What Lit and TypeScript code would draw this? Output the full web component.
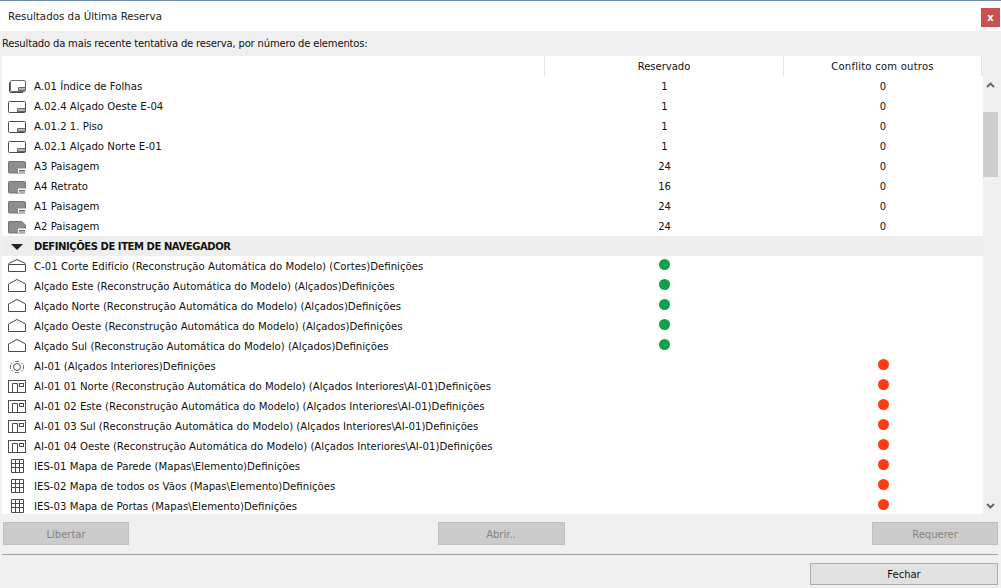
import { LitElement, html, css, svg } from "lit";
import { customElement } from "lit/decorators.js";

const dark = "#4a4a4a";
const notch = svg`<path d="M10.500 16.500v-4h8M11 14h7M11 15.500h7" fill="none" stroke="#666"/>`;
const fnotch = svg`<path d="M11 17v-4.500h8v4.500z" fill="#fff"/><path d="M12 14.500h6M12 16h6" stroke="#666"/>`;
const icons: Record<string, unknown> = {
  index: svg`<rect x="3.500" y="4.500" width="15" height="11" rx="1.500" fill="#fff" stroke="#6a6a6a"/><path d="M2.500 6.500v8.500q0 1.500 1.500 1.500h12" fill="none" stroke="${dark}"/><path d="M11.500 15.500v-4h7M12 13h6M12 14.500h6" fill="none" stroke="#666"/>`,
  layout: svg`<rect x="1.500" y="5.500" width="17" height="11" rx="1" fill="#fff" stroke="${dark}"/>${notch}`,
  filled: svg`<rect x="1.500" y="5.500" width="17" height="11.500" rx="1" fill="#8b8d90" stroke="#717376"/>${fnotch}`,
  corner: svg`<path d="M2 5.500q-.5 0-.5.5v10.500q0 .5.500.5h16.500v-8l-4-3.500z" fill="#8b8d90" stroke="#717376"/>${fnotch}`,
  section: svg`<path d="M1.500 8.500h17v7h-17zM1.500 7.500L10 3.500L18.500 7.500" fill="none" stroke="${dark}"/>`,
  elevation: svg`<path d="M1.500 8L10 3.500L18.500 8V15.500H1.500z" fill="none" stroke="${dark}"/>`,
  ie: svg`<circle cx="10" cy="11" r="3.500" fill="none" stroke="#555"/><path d="M8 5.500h4M8 16.500h4M3.500 9v4M16.500 9v4M5.500 6.800L4.300 8.200M14.500 6.800L15.700 8.200M5.500 15.200L4.300 13.800M14.500 15.200L15.700 13.800" fill="none" stroke="#777"/>`,
  ieplan: svg`<rect x="1.500" y="4.500" width="17" height="12" fill="none" stroke="${dark}"/><path d="M5.500 16.500v-9h5v9" fill="none" stroke="${dark}"/><rect x="12.500" y="7.500" width="4" height="3" fill="none" stroke="${dark}"/>`,
  grid: svg`<path d="M4.500 3.500h12v13h-12zM8.500 3.500v13M12.500 3.500v13M4.500 7.500h12M4.500 11.500h12" fill="none" stroke="${dark}"/>`,
};

type Row = { icon: string; name: string; a?: string; b?: string; dot?: "green" | "red" };
const rows: Row[] = [
  { icon: "index", name: "A.01 Índice de Folhas", a: "1", b: "0" },
  { icon: "layout", name: "A.02.4 Alçado Oeste E-04", a: "1", b: "0" },
  { icon: "layout", name: "A.01.2 1. Piso", a: "1", b: "0" },
  { icon: "layout", name: "A.02.1 Alçado Norte E-01", a: "1", b: "0" },
  { icon: "filled", name: "A3 Paisagem", a: "24", b: "0" },
  { icon: "filled", name: "A4 Retrato", a: "16", b: "0" },
  { icon: "filled", name: "A1 Paisagem", a: "24", b: "0" },
  { icon: "corner", name: "A2 Paisagem", a: "24", b: "0" },
];
const defs: Row[] = [
  { icon: "section", name: "C-01 Corte Edifício (Reconstrução Automática do Modelo) (Cortes)Definições", dot: "green" },
  { icon: "elevation", name: "Alçado Este (Reconstrução Automática do Modelo) (Alçados)Definições", dot: "green" },
  { icon: "elevation", name: "Alçado Norte (Reconstrução Automática do Modelo) (Alçados)Definições", dot: "green" },
  { icon: "elevation", name: "Alçado Oeste (Reconstrução Automática do Modelo) (Alçados)Definições", dot: "green" },
  { icon: "elevation", name: "Alçado Sul (Reconstrução Automática do Modelo) (Alçados)Definições", dot: "green" },
  { icon: "ie", name: "AI-01 (Alçados Interiores)Definições", dot: "red" },
  { icon: "ieplan", name: "AI-01 01 Norte (Reconstrução Automática do Modelo) (Alçados Interiores\\AI-01)Definições", dot: "red" },
  { icon: "ieplan", name: "AI-01 02 Este (Reconstrução Automática do Modelo) (Alçados Interiores\\AI-01)Definições", dot: "red" },
  { icon: "ieplan", name: "AI-01 03 Sul (Reconstrução Automática do Modelo) (Alçados Interiores\\AI-01)Definições", dot: "red" },
  { icon: "ieplan", name: "AI-01 04 Oeste (Reconstrução Automática do Modelo) (Alçados Interiores\\AI-01)Definições", dot: "red" },
  { icon: "grid", name: "IES-01 Mapa de Parede (Mapas\\Elemento)Definições", dot: "red" },
  { icon: "grid", name: "IES-02 Mapa de todos os Vãos (Mapas\\Elemento)Definições", dot: "red" },
  { icon: "grid", name: "IES-03 Mapa de Portas (Mapas\\Elemento)Definições", dot: "red" },
];

@customElement("app-root")
export class AppRoot extends LitElement {
  static styles = css`
    :host { display: block; width: 1001px; height: 588px; background: #f0f0f0; overflow: hidden;
      font-family: "DejaVu Sans", sans-serif; font-size: 10px; color: #111; }
    .title { height: 30px; border-top: 1px solid #6c8ba8; background: #fff; display: flex; align-items: center;
      justify-content: space-between; padding: 0 1px 0 8px; font-size: 10.3px; color: #222; }
    .close { width: 19px; height: 19px; background: #c75050; color: #fff; font-weight: 700; display: flex;
      align-items: center; justify-content: center; font-size: 10px; margin-top: 3px; }
    .intro { height: 25px; display: flex; align-items: center; padding-left: 2px; letter-spacing: -0.17px; }
    .table { display: flex; margin-left: 2px; height: 458px; }
    .main { width: 981px; display: flex; flex-direction: column; overflow: hidden; background: #fff; }
    .grid { display: grid; grid-template-columns: 543px 239px 198px; height: 20px; align-items: center; flex: none; }
    .head { background: #f0f0f0; width: 981px; }
    .head > div { height: 20px; display: flex; align-items: center; justify-content: center; box-sizing: border-box;
      background: #fff; border-right: 1px solid #e3e3e3; }
    .wide { letter-spacing: 0.25px; }
    .cell { text-align: center; }
    .name { display: flex; align-items: center; gap: 7px; padding-left: 5px; white-space: nowrap; font-size: 10.17px; }
    .icon { width: 20px; height: 20px; flex: none; display: block; }
    .group { background: #eeeeee; font-weight: 700; }
    .group .tri { width: 0; height: 0; border-left: 6px solid transparent; border-right: 6px solid transparent;
      border-top: 6px solid #222; margin: 1px 11px 0 9px; }
    .name.grp { gap: 0; padding-left: 0; font-size: 10px; letter-spacing: -0.42px; }
    .dot { width: 11px; height: 11px; border-radius: 50%; display: inline-block; position: relative; top: -2px; vertical-align: middle; }
    .dot.green { background: #11a04a; }
    .dot.red { background: #fb3d15; }
    .sb { width: 15px; display: flex; flex-direction: column; padding-top: 20px; }
    .sb .cap { height: 17px; display: flex; align-items: center; justify-content: center; flex: none; }
    .sb .track { flex: 1; padding-top: 19px; }
    .sb .thumb { height: 65px; background: #cdcdcd; }
    .sb svg { display: block; }
    .buttons { display: flex; justify-content: space-between; padding: 8px 3px 0 3px; }
    .btn { width: 126px; height: 23px; box-sizing: border-box; background: #cccccc; border: 1px solid #bfbfbf; color: #838383;
      display: flex; align-items: center; justify-content: center; padding-top: 1px; }
    .btn.mid { width: 127px; margin-left: 1px; }
    .sep { height: 1px; background: #a0a0a0; margin: 9px 3px 0 2px; }
    .foot { display: flex; justify-content: flex-end; padding: 8px 3px 0 0; }
    .close-btn { width: 188px; height: 22px; box-sizing: border-box; background: #e1e1e1; border: 1px solid #adadad; color: #111;
      display: flex; align-items: center; justify-content: center; }
  `;

  private ic(n: string) {
    return html`<svg class="icon" viewBox="0 0 20 20" width="20" height="20">${icons[n]}</svg>`;
  }

  render() {
    return html`
      <div class="title"><span>Resultados da Última Reserva</span><div class="close">x</div></div>
      <div class="intro">Resultado da mais recente tentativa de reserva, por número de elementos:</div>
      <div class="table">
        <div class="main">
          <div class="grid head"><div></div><div>Reservado</div><div class="wide">Conflito com outros</div></div>
          ${rows.map((r) => this.row(r))}
          <div class="grid group"><div class="name grp"><span class="tri"></span><span>DEFINIÇÕES DE ITEM DE NAVEGADOR</span></div><div></div><div></div></div>
          ${defs.map((r) => this.row(r))}
        </div>
        <div class="sb">
          <div class="cap"><svg width="9" height="6" viewBox="0 0 9 6"><path d="M1 5L4.500 1.500L8 5" fill="none" stroke="#606060" stroke-width="1.800"/></svg></div>
          <div class="track"><div class="thumb"></div></div>
          <div class="cap"><svg width="9" height="6" viewBox="0 0 9 6"><path d="M1 1L4.500 4.500L8 1" fill="none" stroke="#606060" stroke-width="1.800"/></svg></div>
        </div>
      </div>
      <div class="buttons"><div class="btn">Libertar</div><div class="btn mid">Abrir..</div><div class="btn">Requerer</div></div>
      <div class="sep"></div>
      <div class="foot"><div class="close-btn">Fechar</div></div>
    `;
  }

  private row(r: Row) {
    return html`<div class="grid">
      <div class="name">${this.ic(r.icon)}<span>${r.name}</span></div>
      <div class="cell">${r.dot === "green" ? html`<span class="dot green"></span>` : r.a ?? ""}</div>
      <div class="cell">${r.dot === "red" ? html`<span class="dot red"></span>` : r.b ?? ""}</div>
    </div>`;
  }
}
